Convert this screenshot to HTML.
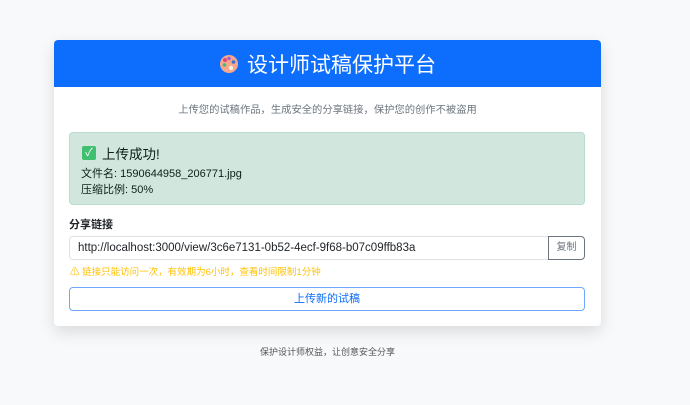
<!DOCTYPE html><html><head><meta charset="utf-8"><style>
*{box-sizing:border-box;margin:0;padding:0}
body{width:690px;height:405px;background:#f8f9fa;font-family:"Liberation Sans","Noto Sans CJK SC",sans-serif;position:relative;overflow:hidden}
.card{position:absolute;left:54px;top:40px;width:547px;height:286px;background:#fff;border-radius:4px;box-shadow:0 6px 16px rgba(0,0,0,.12);overflow:hidden}
.hd{height:47px;background:#0d6efd;color:#fff;font-size:21px;display:flex;align-items:center;justify-content:center;gap:8px}
.sub{position:absolute;top:61px;width:100%;text-align:center;font-size:10.3px;color:#6c757d}
.alert{position:absolute;left:15px;top:92px;width:516px;height:73px;background:#d1e7dd;border:1px solid #badbcc;border-radius:4px;color:#0f1f17}
.at{position:absolute;left:12px;top:10px;font-size:13.5px;display:flex;align-items:center;gap:6px}
.chk{width:14px;height:14px;background:#3fbf6f;border-radius:2px;color:#fff;font-size:11px;line-height:14px;text-align:center}
.l{position:absolute;left:11px;font-size:11px}
.lab{position:absolute;left:15px;top:176px;font-size:11px;font-weight:bold;color:#212529}
.inp{position:absolute;left:15px;top:196px;width:480px;height:24px;border:1px solid #dee2e6;border-radius:4px 0 0 4px;font-size:11.5px;line-height:22px;padding-left:8px;color:#212529}
.cp{position:absolute;left:494px;top:196px;width:37px;height:24px;border:1px solid #6c757d;border-radius:0 4px 4px 0;font-size:10px;color:#6c757d;text-align:center;line-height:22px}
.warn{position:absolute;left:16px;top:224px;font-size:9.5px;color:#ffc107}
.btn{position:absolute;left:15px;top:247px;width:516px;height:24px;border:1px solid #6ea8fe;border-radius:4px;color:#0d6efd;font-size:11px;text-align:center;line-height:22px}
.ft{position:absolute;left:54px;top:345px;width:547px;text-align:center;font-size:9px;color:#555}
</style></head><body>
<div class="card">
<div class="hd"><svg width="20" height="20" viewBox="0 0 20 20"><circle cx="10" cy="10" r="9" fill="#f5a88a"/><circle cx="6" cy="6" r="2" fill="#e0457b"/><circle cx="10" cy="4.5" r="1.8" fill="#a05fd8"/><circle cx="14.5" cy="8" r="1.8" fill="#3b6fd8"/><circle cx="5.5" cy="11" r="1.8" fill="#3cbf7a"/><circle cx="12" cy="14" r="2.2" fill="#fff" opacity=".8"/></svg><span>设计师试稿保护平台</span></div>
<div class="sub">上传您的试稿作品，生成安全的分享链接，保护您的创作不被盗用</div>
<div class="alert"><div class="at"><span class="chk">✓</span>上传成功!</div>
<div class="l" style="top:32px">文件名: 1590644958_206771.jpg</div>
<div class="l" style="top:48px">压缩比例: 50%</div></div>
<div class="lab">分享链接</div>
<div class="inp">http://localhost:3000/view/3c6e7131-0b52-4ecf-9f68-b07c09ffb83a</div>
<div class="cp">复制</div>
<div class="warn">⚠ 链接只能访问一次，有效期为6小时，查看时间限制1分钟</div>
<div class="btn">上传新的试稿</div>
</div>
<div class="ft">保护设计师权益，让创意安全分享</div>
</body></html>
